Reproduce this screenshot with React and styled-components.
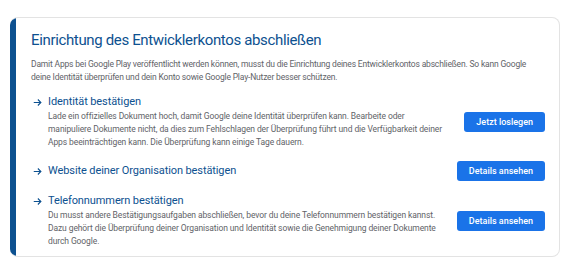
import React from "react";
import styled, { createGlobalStyle } from "styled-components";

const GlobalStyle = createGlobalStyle`
  body {
    margin: 0;
    background: #ffffff;
    font-family: Roboto, "Liberation Sans", sans-serif;
  }
`;

const Page = styled.div`
  padding: 17px 12px 0 10px;
`;

const Card = styled.section`
  display: flex;
  border: 1px solid #e3e3e3;
  border-left: none;
  border-radius: 8px;
  overflow: hidden;
  width: 550px;
  box-sizing: border-box;
`;

const Accent = styled.div`
  width: 6px;
  flex-shrink: 0;
  background: #0d5190;
`;

const Body = styled.div`
  flex: 1;
  padding: 12px 14px 8px 15px;
`;

const Title = styled.h2`
  margin: 0;
  font-size: 15px;
  line-height: 20px;
  letter-spacing: -0.35px;
  font-weight: 400;
  color: #0d5190;
`;

const Intro = styled.p`
  margin: 8px 0 0;
  font-size: 8.5px;
  line-height: 13px;
  letter-spacing: -0.18px;
  color: #5f6368;
`;

const Steps = styled.div`
  display: flex;
  flex-direction: column;
  gap: 12px;
  margin-top: 10px;
`;

const Step = styled.div`
  display: flex;
  align-items: center;
  justify-content: space-between;
`;

const StepText = styled.div`
  display: grid;
  grid-template-columns: 17px 394px;
`;

const Arrow = styled.svg`
  width: 9px;
  height: 9px;
  margin: 4px 0 0 2px;
  color: #0d5190;
`;

const StepTitle = styled.h3`
  margin: 0;
  font-size: 11px;
  line-height: 16px;
  letter-spacing: -0.1px;
  font-weight: 400;
  color: #0d5190;
`;

const StepDesc = styled.p`
  grid-column: 2;
  margin: 0;
  font-size: 8.5px;
  line-height: 13px;
  letter-spacing: -0.1px;
  color: #5f6368;
`;

const Button = styled.button`
  height: 20px;
  padding: 0 12px;
  border: none;
  border-radius: 3px;
  background: #1a73e8;
  color: #ffffff;
  font-family: Roboto, "Liberation Sans", sans-serif;
  font-size: 9px;
  font-weight: 500;
  white-space: nowrap;
  cursor: pointer;
`;

const steps = [
  {
    title: "Identität bestätigen",
    desc: "Lade ein offizielles Dokument hoch, damit Google deine Identität überprüfen kann. Bearbeite oder manipuliere Dokumente nicht, da dies zum Fehlschlagen der Überprüfung führt und die Verfügbarkeit deiner Apps beeinträchtigen kann. Die Überprüfung kann einige Tage dauern.",
    action: "Jetzt loslegen",
  },
  {
    title: "Website deiner Organisation bestätigen",
    action: "Details ansehen",
  },
  {
    title: "Telefonnummern bestätigen",
    desc: "Du musst andere Bestätigungsaufgaben abschließen, bevor du deine Telefonnummern bestätigen kannst. Dazu gehört die Überprüfung deiner Organisation und Identität sowie die Genehmigung deiner Dokumente durch Google.",
    action: "Details ansehen",
  },
];

const ArrowIcon = () => (
  <Arrow viewBox="0 0 12 12" fill="none" stroke="currentColor" strokeWidth="1.5">
    <path d="M1 6h9.5M6.5 2l4 4-4 4" />
  </Arrow>
);

export default function App() {
  return (
    <>
      <GlobalStyle />
      <Page>
        <Card>
          <Accent />
          <Body>
            <Title>Einrichtung des Entwicklerkontos abschließen</Title>
            <Intro>
              Damit Apps bei Google Play veröffentlicht werden können, musst du die Einrichtung deines
              Entwicklerkontos abschließen. So kann Google deine Identität überprüfen und dein Konto sowie
              Google Play-Nutzer besser schützen.
            </Intro>
            <Steps>
              {steps.map((step) => (
                <Step key={step.title}>
                  <StepText>
                    <ArrowIcon />
                    <StepTitle>{step.title}</StepTitle>
                    {step.desc && <StepDesc>{step.desc}</StepDesc>}
                  </StepText>
                  <Button>{step.action}</Button>
                </Step>
              ))}
            </Steps>
          </Body>
        </Card>
      </Page>
    </>
  );
}
